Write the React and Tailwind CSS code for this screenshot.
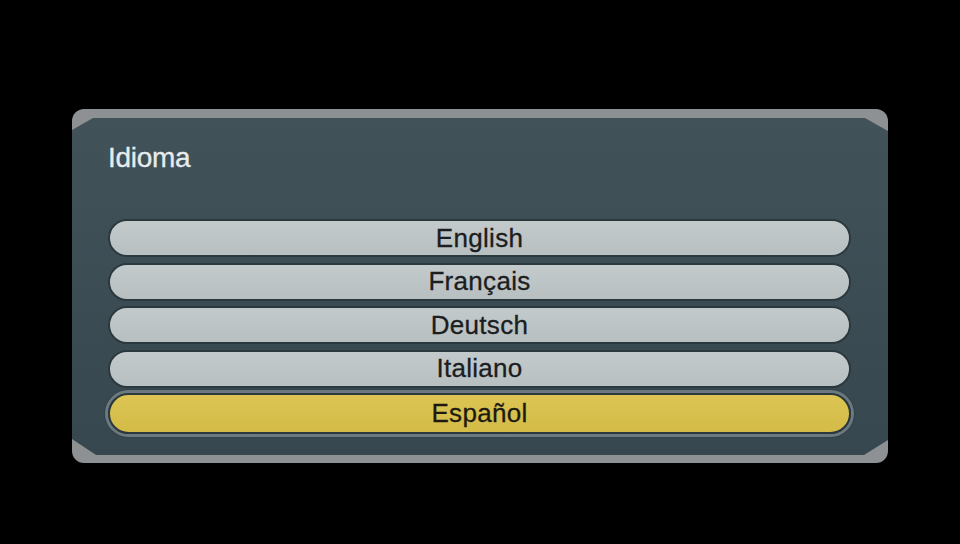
import React, { useState } from 'react'

const languages = ['English', 'Français', 'Deutsch', 'Italiano', 'Español']

const font = { fontFamily: '"Liberation Sans", Arial, sans-serif' }

export default function App() {
    const [selected, setSelected] = useState(4)

    return (
        <div className="w-[960px] h-[544px] bg-black flex items-start pt-[109px] pl-[72px]" style={font}>
            {/* bingkai abu-abu luar */}
            <div className="w-[816px] h-[354px] rounded-[12px] bg-[#8e9194] pt-[9px] pb-[8px] flex">
                <div className="flex-1 flex flex-col bg-gradient-to-b from-[#425259] to-[#37474f] [clip-path:polygon(21px_0,calc(100%-23px)_0,100%_13px,100%_calc(100%-15px),calc(100%-24px)_100%,24px_100%,0_calc(100%-16px),0_12px)] px-[36px]">
                    <div className="pt-[24px] text-[28px] leading-[32px] text-[#e6ecee] tracking-[-0.3px] [-webkit-text-stroke:0.3px_#e6ecee]">Idioma</div>

                    <div className="mt-[45px] flex flex-col gap-[5.5px] pr-[1px]">
                        {languages.map((lang, i) => (
                            <button
                                key={lang}
                                type="button"
                                onClick={() => setSelected(i)}
                                className={
                                    i === selected
                                        ? 'h-[41px] rounded-full border-2 border-[#2b383e] bg-gradient-to-b from-[#dcc553] to-[#d4bb48] shadow-[0_0_0_3px_#6c7a80,0_0_0_4px_#33424a] flex items-center justify-center text-[26px] text-[#1c1a10] tracking-[0.3px] [-webkit-text-stroke:0.3px_#1c1a10]'
                                        : 'h-[38px] rounded-full border-2 border-[#2b383e] bg-gradient-to-b from-[#c3cacb] to-[#b7bfc0] flex items-center justify-center text-[26px] text-[#1b1d1e] tracking-[0.3px] [-webkit-text-stroke:0.3px_#1b1d1e]'
                                }
                            >
                                {lang}
                            </button>
                        ))}
                    </div>
                </div>
            </div>
        </div>
    )
}
